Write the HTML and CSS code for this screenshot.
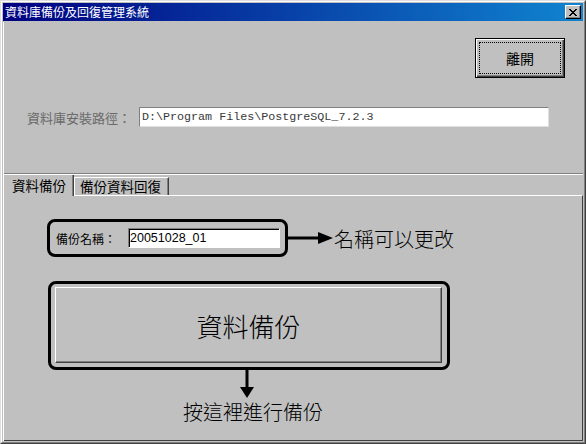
FILE: index.html
```html
<!DOCTYPE html>
<html lang="zh-Hant">
<head>
  <meta charset="UTF-8" />
  <title>資料庫備份及回復管理系統</title>
  <link rel="stylesheet" href="styles.css">
</head>
<body>
  <div class="window">
    <div class="frame">
      <!-- 標題列 -->
      <div class="titlebar">
        <span class="title">資料庫備份及回復管理系統</span>
        <button class="close-x" aria-label="關閉">
          <svg width="8" height="7" viewBox="0 0 8 7" shape-rendering="crispEdges">
            <path d="M0 0h2v1h-2zM6 0h2v1h-2zM1 1h2v1h-2zM5 1h2v1h-2zM2 2h4v1h-4zM3 3h2v1h-2zM2 4h4v1h-4zM1 5h2v1h-2zM5 5h2v1h-2zM0 6h2v1h-2zM6 6h2v1h-2z" fill="#000"/>
          </svg>
        </button>
      </div>

      <div class="client">
        <div class="top">
          <div class="btn-row">
            <button class="btn-exit"><span class="focus">離開</span></button>
          </div>
          <div class="path-row">
            <label class="path-label">資料庫安裝路徑：</label>
            <input class="path-input" value="D:\Program Files\PostgreSQL_7.2.3" readonly>
          </div>
        </div>

        <div class="sep"></div>

        <!-- 頁籤 -->
        <div class="tabs">
          <div class="tab active">資料備份</div>
          <div class="tab">備份資料回復</div>
        </div>

        <div class="panel">
          <div class="note-row">
            <div class="ring name-ring">
              <span class="name-label">備份名稱：</span>
              <input class="name-input" value="20051028_01">
            </div>
            <svg class="arrow-right" width="45" height="14" viewBox="0 0 45 14">
              <rect x="0" y="5.5" width="31" height="3" fill="#000"/>
              <polygon points="30,1 45,7 30,13" fill="#000"/>
            </svg>
            <span class="note">名稱可以更改</span>
          </div>

          <div class="ring big-ring">
            <button class="btn-backup">資料備份</button>
          </div>

          <svg class="arrow-down" width="14" height="28" viewBox="0 0 14 28">
            <rect x="5.5" y="0" width="3" height="18" fill="#000"/>
            <polygon points="0,17 14,17 7,28" fill="#000"/>
          </svg>
          <p class="note hint">按這裡進行備份</p>
        </div>
      </div>
    </div>
  </div>
</body>
</html>
```

FILE: styles.css
```css
:root{
  --face:#c0c0c0;
  --light:#fff;
  --shadow:#808080;
  --dark:#404040;
}
*{box-sizing:border-box;}
body{
  margin:0;
  background:var(--face);
  font-family:"Noto Sans CJK TC","Noto Sans CJK SC",sans-serif;
  color:#000;
}

/* 視窗外框 */
.window{
  width:586px;height:444px;
  border:1px solid;
  border-color:#dfdfdf var(--dark) var(--dark) #dfdfdf;
}
.frame{
  height:100%;
  border:1px solid;
  border-color:var(--light) var(--shadow) var(--shadow) var(--light);
  padding:1px;
  display:flex;flex-direction:column;
}

/* 標題列 */
.titlebar{
  height:18px;
  margin-bottom:1px;
  display:flex;align-items:center;justify-content:space-between;
  padding:0 2px 0 2px;
  background:linear-gradient(to right,#000080,#1084d0);
}
.title{color:#fff;font-size:12px;line-height:18px;}
.close-x{
  width:16px;height:14px;padding:0;
  display:flex;align-items:center;justify-content:center;
  background:var(--face);
  border:1px solid;
  border-color:var(--light) #000 #000 var(--light);
  box-shadow:inset -1px -1px var(--shadow);
}

/* 主畫面 */
.client{
  flex:1;
  display:flex;flex-direction:column;
  border-left:1px solid var(--light);
}
.top{height:151px;padding-top:16px;}
.btn-row{display:flex;justify-content:flex-end;padding-right:18px;}
.btn-exit{
  width:90px;height:40px;padding:3px;
  background:var(--face);
  border:1px solid #000;
  box-shadow:inset 1px 1px var(--light),inset -1px -1px var(--dark),inset -2px -2px var(--shadow);
  font-family:inherit;
}
.focus{
  display:flex;align-items:center;justify-content:center;
  height:100%;
  border:1px dotted #000;
  font-size:14px;
}
.path-row{display:flex;align-items:center;margin-top:29px;padding-left:23px;}
.path-label{font-size:13px;color:#6a6a6a;width:112px;}
.path-input{
  width:410px;height:20px;padding:0 2px;
  border:1px solid;
  border-color:var(--shadow) #dfdfdf #dfdfdf var(--shadow);
  background:#fff;
  font-family:"Liberation Mono",monospace;
  font-size:11.7px;
  color:#3a3a3a;
  outline:none;
}

.sep{border-top:1px solid var(--shadow);border-bottom:1px solid var(--light);}

/* 頁籤 */
.tabs{display:flex;align-items:flex-end;height:20px;}
.tab{
  height:18px;
  padding:0 7px 0 5px;
  font-size:13.5px;line-height:17px;
  border:1px solid;border-bottom:none;
  border-color:var(--light) var(--dark) transparent var(--light);
  box-shadow:inset -1px 0 var(--shadow);
}
.tab.active{
  height:21px;margin-bottom:-1px;
  padding:2px 7px 0 8px;
  width:70px;
  border-left:none;border-top:none;
  background:var(--face);
  position:relative;z-index:1;
}

.panel{
  flex:1;
  border-top:1px solid var(--light);
  border-right:1px solid var(--dark);
  border-bottom:1px solid var(--dark);
  padding:23px 0 0 43px;
}

/* 說明框 */
.ring{border:3px solid #000;border-radius:8px;}
.note-row{display:flex;align-items:center;}
.name-ring{
  width:241px;height:38px;
  display:flex;align-items:center;
  padding:0 5px 0 6px;
}
.name-label{font-size:12px;width:72px;}
.name-input{
  width:152px;height:20px;padding:0 1px;
  border:1px solid;
  border-color:var(--shadow) var(--light) var(--light) var(--shadow);
  box-shadow:inset 1px 1px #000;
  background:#fff;
  font-family:"Liberation Sans",Arial,sans-serif;
  font-size:12.5px;
  outline:none;
}
.arrow-right{display:block;}
.note{font-size:20px;font-weight:300;margin-left:1px;}

.big-ring{
  width:402px;height:89px;
  margin:24px 0 0 1px;
  padding:3px 5px 4px 4px;
}
.btn-backup{
  width:100%;height:100%;
  background:var(--face);
  border:1px solid;
  border-color:var(--light) var(--dark) var(--dark) var(--light);
  box-shadow:inset -1px -1px var(--shadow);
  font-family:inherit;
  font-size:26px;
  font-weight:300;
  color:#000;
}
.arrow-down{display:block;margin-left:193px;}
.hint{margin:2px 0 0 136px;line-height:24px;}
```
